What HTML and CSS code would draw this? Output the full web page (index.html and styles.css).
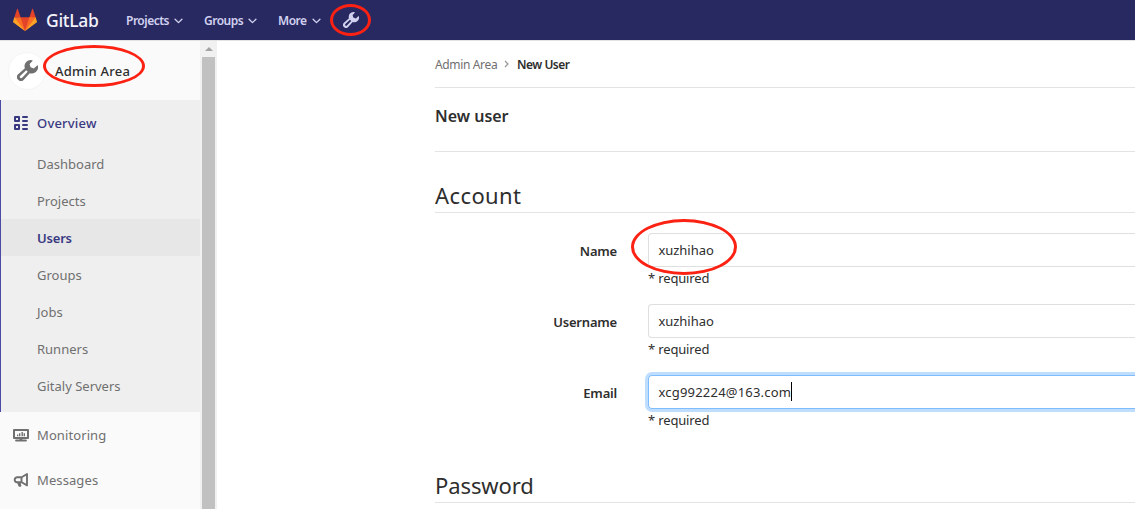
FILE: index.html
```html
<!DOCTYPE html>
<html lang="en">
<head>
<meta charset="utf-8">
<title>New User · GitLab</title>
<link rel="stylesheet" href="styles.css">
</head>
<body>
<svg class="defs" width="0" height="0" aria-hidden="true">
  <symbol id="wrench" viewBox="0 0 16 16"><path fill-rule="evenodd" d="M11.6.2A4.7 4.7 0 0 0 6 6.3L.9 10.8A3 3 0 0 0 5.2 15.1L9.7 10A4.7 4.7 0 0 0 15.8 4.2Q15.6 3.9 15.3 4.2L12.9 6.5 10.3 5.6 9.6 3.1 11.8.8Q12.1.3 11.6.2ZM7 7.8 8.2 9 3.9 13.6A1 1 0 0 1 2.4 12.1Z"/></symbol>
  <symbol id="chevron" viewBox="0 0 10 6"><path d="M1.2 1 5 4.8 8.8 1" fill="none" stroke="currentColor" stroke-width="1.5" stroke-linecap="round" stroke-linejoin="round"/></symbol>
</svg>
<header class="navbar">
  <a class="brand">
    <svg class="logo" viewBox="0 0 36 36"><path fill="#e24329" d="M2 14l9.38 9v-9l-4-12.28c-.205-.632-1.176-.632-1.38 0zM34 14l-9.38 9v-9l4-12.28c.205-.632 1.176-.632 1.38 0zM18 34.38 3 14h30z"/><path fill="#fc6d26" d="M18 34.38 11.38 14H2l4 11zM18 34.38 24.62 14H34l-4 11z"/><path fill="#fca326" d="M2 14 .1 20.16c-.18.565 0 1.2.5 1.56L18 34.38zM34 14l1.9 6.16c.18.565 0 1.2-.5 1.56L18 34.38z"/></svg>
    <span class="brand-name">GitLab</span>
  </a>
  <nav class="menu">
    <a class="menu-item projects">Projects<svg class="caret"><use href="#chevron"/></svg></a>
    <a class="menu-item groups">Groups<svg class="caret"><use href="#chevron"/></svg></a>
    <a class="menu-item more">More<svg class="caret"><use href="#chevron"/></svg></a>
    <a class="admin-link"><svg class="admin-icon"><use href="#wrench"/></svg><span class="ring ring-nav"></span></a>
  </nav>
</header>
<div class="layout">
  <aside class="sidebar">
    <div class="context"><span class="avatar"><svg class="avatar-icon"><use href="#wrench"/></svg></span><span class="context-title">Admin Area</span><span class="ring ring-area"></span></div>
    <section class="active-section">
      <a class="top-item current"><svg class="icon" viewBox="0 0 16 16"><path fill="none" stroke="currentColor" stroke-width="2" stroke-linejoin="round" d="M2 2h4v4H2zM2 10h4v4H2z"/><path stroke="currentColor" stroke-width="2" stroke-linecap="round" d="M10 2h4M10 6h4M10 10h4M10 14h4"/></svg>Overview</a>
      <ul class="sub">
        <li>Dashboard</li>
        <li>Projects</li>
        <li class="selected">Users</li>
        <li>Groups</li>
        <li>Jobs</li>
        <li>Runners</li>
        <li>Gitaly Servers</li>
      </ul>
    </section>
    <a class="top-item"><svg class="icon" viewBox="0 0 16 16"><path fill="none" stroke="currentColor" stroke-width="2" stroke-linejoin="round" d="M1 3h14v8H1z"/><path fill="currentColor" d="M4 7.5h1.3v1.7H4zM6 6.3h1.4v2.9H6zM8.5 5h1.4v4.2H8.5zM10.6 6.3H12v2.9h-1.4zM6.7 11h2.6v2H6.7zM3 12.6h10a.9.9 0 0 1 0 1.8H3a.9.9 0 0 1 0-1.8z"/></svg>Monitoring</a>
    <a class="top-item"><svg class="icon" viewBox="0 0 16 16"><path fill="none" stroke="currentColor" stroke-width="1.9" stroke-linejoin="round" stroke-linecap="round" d="M14 2v11.4L8.7 10.2H4.2a2.5 2.5 0 0 1 0-5h4.5zM8.5 5.4v4.8M5 10.4l1.3 3.3H7.4l-.9-3.3"/></svg>Messages</a>
  </aside>
  <div class="scrollbar"><span class="arrow"></span><span class="thumb"></span></div>
  <main class="content">
    <nav class="crumbs"><span class="crumb">Admin Area</span><svg class="crumb-sep" viewBox="0 0 5 8"><path d="M1 1l3 3-3 3" fill="none" stroke="currentColor" stroke-width="1.3"/></svg><span class="crumb-current">New User</span></nav>
    <h1 class="page-title">New user</h1>
    <form>
      <h2 class="legend">Account</h2>
      <div class="fields">
        <div class="row"><label class="label">Name</label><div class="control"><div class="input"><span class="value">xuzhihao</span></div><p class="help">* required</p><span class="ring ring-name"></span></div></div>
        <div class="row"><label class="label">Username</label><div class="control"><div class="input"><span class="value">xuzhihao</span></div><p class="help">* required</p></div></div>
        <div class="row"><label class="label">Email</label><div class="control"><div class="input focused"><span class="value email">xcg992224@163.com</span><span class="cursor"></span></div><p class="help">* required</p></div></div>
      </div>
      <h2 class="legend password">Password</h2>
    </form>
  </main>
</div>
</body>
</html>
```
FILE: styles.css
```css
* { box-sizing: border-box; }
body { margin: 0; height: 509px; overflow: hidden; background: #fff; color: #2e2e2e; font: 13px/20px "Noto Sans", "Open Sans", sans-serif; }
.defs { position: absolute; }
.navbar { display: flex; align-items: center; height: 40px; padding-left: 13px; background: #292961; color: #d1d1f0; }
.brand { display: flex; align-items: center; gap: 9px; width: 113px; }
.logo { width: 24px; height: 24px; }
.brand-name { color: #f2f2fa; font-size: 17.5px; font-weight: 500; letter-spacing: -.3px; }
.menu { display: flex; align-items: center; font-size: 12px; font-weight: 600; }
.menu-item { display: flex; align-items: center; justify-content: space-between; letter-spacing: -.5px; padding-top: 1px; }
.projects { width: 57px; margin-right: 21px; }
.groups { width: 53px; margin-right: 21px; }
.more { width: 43px; margin-right: 22px; }
.caret { width: 9px; height: 6px; }
.admin-link { position: relative; display: flex; }
.admin-icon { width: 16px; height: 16px; fill: currentColor; }
.ring { position: absolute; z-index: 2; border: 3px solid #fc2213; border-radius: 50%; }
.ring-nav { left: -13px; top: -8px; width: 41px; height: 32px; }
.ring-area { left: 43px; top: 4px; width: 102px; height: 42px; }
.ring-name { left: -17px; top: -14px; width: 106px; height: 56px; }
.layout { display: flex; height: 469px; border-top: 1px solid #e3e3e3; }
.sidebar { width: 200px; background: #fafafa; color: #707070; }
.context { position: relative; display: flex; align-items: center; height: 59px; padding: 0 0 0 8px; gap: 9px; }
.avatar { display: flex; align-items: center; justify-content: center; width: 38px; height: 38px; border-radius: 50%; background: #fff; border: 1px solid #f5f5f5; }
.avatar-icon { width: 21px; height: 21px; fill: #707070; }
.context-title { color: #2e2e2e; font-weight: 500; letter-spacing: .25px; }
.active-section { height: 312px; background: #efefef; box-shadow: inset 1px 0 #4b4ba3; }
.top-item { display: flex; align-items: center; gap: 8px; height: 45px; padding-left: 13px; letter-spacing: .1px; }
.top-item.current { color: #393982; font-weight: 500; padding-top: 1px; letter-spacing: .2px; }
.icon { width: 16px; height: 16px; }
.sub { margin: 0; padding: 0 0 0 1px; list-style: none; }
.sub li { height: 37px; padding: 9px 0 0 36px; }
.sub .selected { background: #e7e7e7; color: #393982; font-weight: 600; letter-spacing: -.2px; }
.scrollbar { display: flex; flex-direction: column; align-items: center; width: 17px; background: #f1f1f1; }
.arrow { height: 4px; margin: 6px 0; border: 4px solid transparent; border-top: 0; border-bottom-color: #a3a3a3; }
.thumb { width: 13px; flex: 1; background: #c1c1c1; }
.content { flex: 1; padding-left: 218px; }
.crumbs { display: flex; align-items: center; height: 47px; padding-top: 1px; border-bottom: 1px solid #e3e3e3; font-size: 12px; white-space: nowrap; }
.crumb { width: 62px; color: #707070; letter-spacing: -.35px; }
.crumb-sep { width: 5px; height: 8px; margin: 0 8px 2px 7px; color: #999; }
.crumb-current { font-weight: 600; letter-spacing: -.5px; }
.page-title { height: 64px; margin: 0; padding-top: 18px; border-bottom: 1px solid #e3e3e3; font-size: 16px; font-weight: 600; }
.legend { height: 61px; margin: 0; padding-top: 27px; border-bottom: 1px solid #e3e3e3; font-size: 22px; line-height: 32px; font-weight: 400; letter-spacing: .4px; }
.legend.password { letter-spacing: -.1px; }
.fields { padding-top: 20px; height: 229px; }
.row { display: flex; height: 71px; }
.label { width: 183px; padding: 8px 1px 0 0; text-align: right; font-weight: 600; letter-spacing: -.2px; }
.control { position: relative; flex: 1; margin-left: 30px; }
.input { display: flex; align-items: center; height: 34px; padding-left: 9.5px; border: 1px solid #dfdfdf; border-right: 0; border-radius: 4px 0 0 4px; }
.value { letter-spacing: -.05px; }
.value.email { letter-spacing: .2px; }
.input.focused { border-color: #80bdff; box-shadow: 0 0 0 3px #bfdeff; }
.cursor { width: 1px; height: 19px; margin-top: -1px; background: #000; }
.help { margin: 1px 0 0; letter-spacing: -.15px; }
```
